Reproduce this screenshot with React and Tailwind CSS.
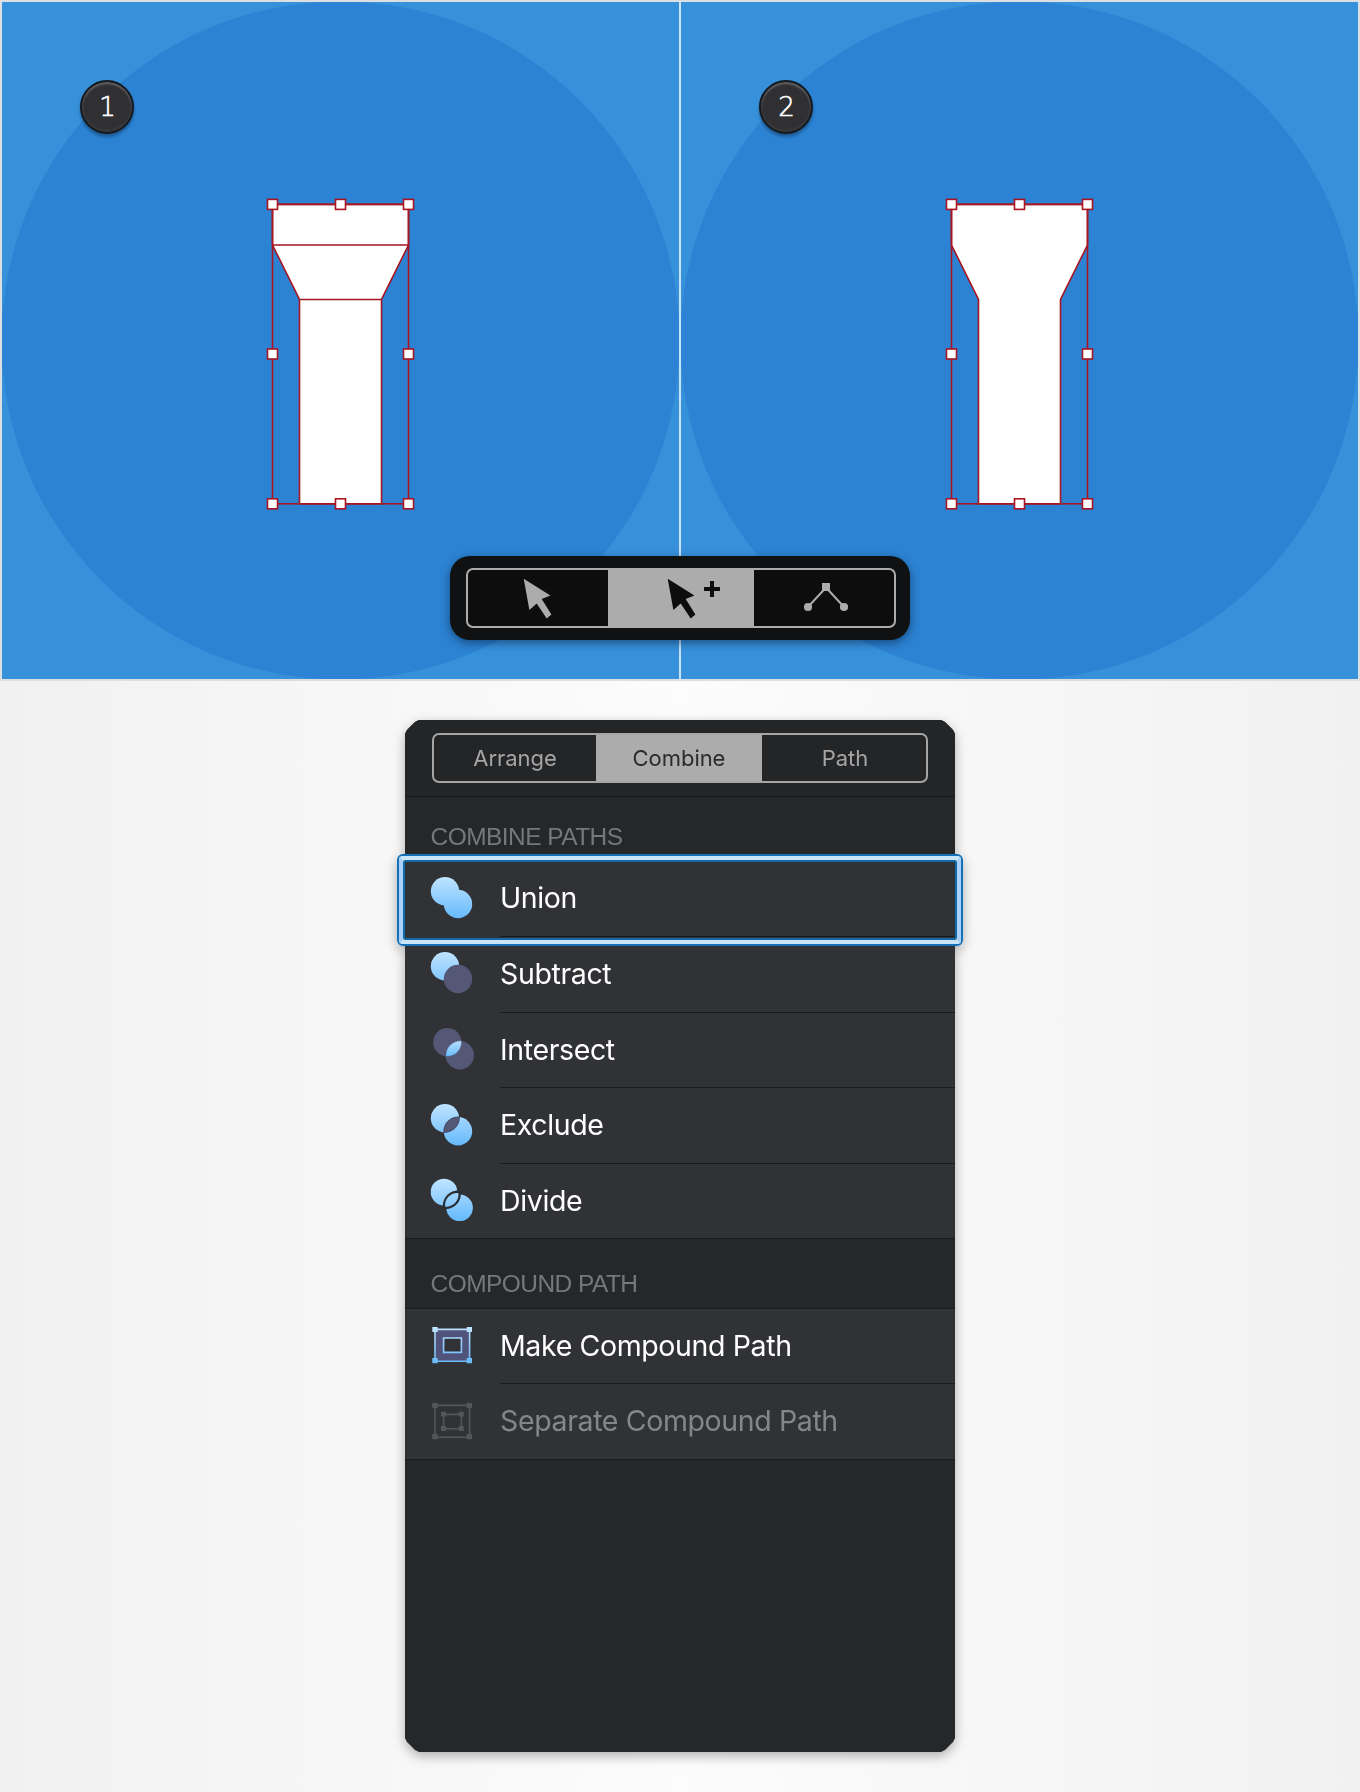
import React from "react";

const RED = "#a81420";

function Handles() {
  const points = [
    [272.5, 204.4], [340.5, 204.4], [408.5, 204.4],
    [272.5, 354], [408.5, 354],
    [272.5, 503.8], [340.5, 503.8], [408.5, 503.8],
  ];
  return points.map(([x, y]) => (
    <rect key={`${x}-${y}`} x={x - 5} y={y - 5} width="10" height="10" fill="#fff" stroke={RED} strokeWidth="1.6" />
  ));
}

function Flashlight({ merged }) {
  return (
    <svg className="block h-full w-full" viewBox="2 2 677 677" preserveAspectRatio="none">
      <circle cx="340.5" cy="340.5" r="339" fill="#2c83d3" />
      <path d="M272.5 204.4H408.5V245L381.5 299.5V503.8H299.5V299.5L272.5 245Z" fill="#fff" stroke={RED} strokeWidth="1.6" />
      {!merged && <path d="M272.5 245H408.5M299.5 299.5H381.5" stroke={RED} strokeWidth="1.6" />}
      <rect x="272.5" y="204.4" width="136" height="299.4" fill="none" stroke={RED} strokeWidth="1.6" />
      <Handles />
    </svg>
  );
}

function Canvas({ number, merged }) {
  return (
    <div className="relative h-[677px] flex-1 overflow-hidden bg-[#3791da]">
      <Flashlight merged={merged} />
      <div className="absolute left-[78px] top-[78px] flex h-[54px] w-[54px] items-center justify-center rounded-full border-2 border-[#151a20] bg-[#303033] pl-px font-['DejaVu_Sans',sans-serif] text-[26px] font-extralight leading-none text-white shadow-[0_3px_3px_rgba(10,30,60,0.4),inset_0_2px_2px_rgba(255,255,255,0.25),inset_0_-2px_3px_rgba(255,255,255,0.06)] [-webkit-text-stroke:0.6px_white]">
        {number}
      </div>
    </div>
  );
}

const ARROW = "M0 0L26.7 16.7L18 20.3L27.7 35.7L23 39.7L13 24.7L5.7 31.3Z";

function Toolbar() {
  return (
    <div className="absolute left-[450px] top-[556px] h-[84px] w-[460px] rounded-[20px] bg-[#101112] px-4 py-3 shadow-[0_3px_10px_rgba(0,20,50,0.5)]">
      <div className="flex h-[60px] w-[430px] overflow-hidden rounded-[7px] border-2 border-[#acacac] bg-[#0d0d0e]">
        <div className="h-full w-[140px]">
          <svg className="block" width="140" height="56">
            <path transform="translate(55.7 8.7)" d={ARROW} fill="#acacac" />
          </svg>
        </div>
        <div className="h-full w-[146px] bg-[#acacac]">
          <svg className="block" width="146" height="56">
            <path transform="translate(59.7 8.7)" d={ARROW} fill="#0d0d0e" />
            <path d="M96 19H112M104 11V27" stroke="#0d0d0e" strokeWidth="4" />
          </svg>
        </div>
        <div className="h-full flex-1">
          <svg className="block" width="140" height="56">
            <path d="M54 37L72 17.5L90 37" fill="none" stroke="#acacac" strokeWidth="2" />
            <path d="M68 13H76V21H68Z" fill="#acacac" />
            <circle cx="54" cy="37" r="4.1" fill="#acacac" />
            <circle cx="90" cy="37" r="4.1" fill="#acacac" />
          </svg>
        </div>
      </div>
    </div>
  );
}

function Tabs() {
  return (
    <div className="flex h-[77px] border-b border-[#191a1c] bg-[#242527] px-[27px] pt-[13px]">
      <div className="flex h-[50px] w-[496px] overflow-hidden rounded-[7px] border-2 border-[#a5a5a6] text-[22px] leading-[46px] tracking-[-0.05px]">
        <div className="w-[162px] text-center text-[#a5a5a6]">Arrange</div>
        <div className="w-[166px] bg-[#acacac] text-center text-[#2a2b2e]">Combine</div>
        <div className="flex-1 pl-[2px] text-center text-[#a5a5a6]">Path</div>
      </div>
    </div>
  );
}

function Gradient({ id, y1, y2 }) {
  return (
    <linearGradient id={id} gradientUnits="userSpaceOnUse" x1="0" x2="0" y1={y1} y2={y2}>
      <stop offset="0" stopColor="#bfe4ff" />
      <stop offset="1" stopColor="#67bafd" />
    </linearGradient>
  );
}

const MUTED = "#555777";
const LENS = "M28.9 14.9A14.2 14.2 0 0 1 13.9 28.6A14.2 14.2 0 0 1 28.9 14.9Z";

function BooleanIcon({ kind }) {
  const fill = `url(#g-${kind})`;
  return (
    <svg className="block" width="44" height="44" viewBox="-0.3 0 44 44">
      <defs>
        <Gradient id={`g-${kind}`} y1={kind === "intersect" ? 12 : 1} y2={kind === "intersect" ? 30 : 42} />
      </defs>
      {kind === "union" && (
        <>
          <circle cx="14.7" cy="15.2" r="14.2" fill={fill} />
          <circle cx="27.7" cy="28" r="14.2" fill={fill} />
        </>
      )}
      {kind === "subtract" && (
        <>
          <circle cx="14.7" cy="15.2" r="14.2" fill={fill} />
          <circle cx="27.7" cy="28" r="14.2" fill={MUTED} />
        </>
      )}
      {kind === "intersect" && (
        <g transform="translate(2.3 0)">
          <circle cx="14.7" cy="15.2" r="14.2" fill={MUTED} />
          <circle cx="27.2" cy="28.2" r="14.2" fill={MUTED} />
          <path d="M28.9 13.9C29.6 22.8 22.5 29.9 13.2 29.4C12.8 20.5 20 13.3 28.9 13.9Z" fill={fill} stroke="#424766" strokeWidth="0.4" />
        </g>
      )}
      {kind === "exclude" && (
        <>
          <circle cx="14.7" cy="15.2" r="14.2" fill={fill} />
          <circle cx="27.7" cy="28.2" r="14.2" fill={fill} />
          <path d="M29 14C29.6 22.5 22.5 29.6 13.5 29.4C13 20.5 20 13.4 29 14Z" fill={MUTED} stroke="#35405c" strokeWidth="0.8" />
        </>
      )}
      {kind === "divide" && (
        <>
          <circle cx="13.7" cy="14" r="13.3" fill={fill} />
          <circle cx="29.3" cy="29.8" r="13.3" fill={fill} />
          <path d="M30.2 12.6C32.4 23.5 23.8 32.3 12.8 31C10.9 20 19.3 11.2 30.2 12.6Z" fill="#292e36" />
          <path d="M28.1 15C29 22.5 23 29.2 14.8 28.7C14 21 20 14.5 28.1 15Z" fill={fill} />
        </>
      )}
    </svg>
  );
}

function CompoundIcon({ kind }) {
  const separate = kind === "separate";
  const color = separate ? "#55565a" : "url(#g-make)";
  return (
    <svg className="block" width="44" height="44" viewBox="0 0 44 44">
      <defs>
        <Gradient id="g-make" y1="4" y2="40" />
      </defs>
      <path fillRule="evenodd" d="M5 6.4H39.3V38.4H5ZM13.3 15.2V29.5H31.3V15.2Z" fill={separate ? "none" : "#50537a"} />
      <path
        d={separate ? "M5 6.4H39.6V38.3H5ZM13.6 15.4V29.8H31.4V15.4Z" : "M5 6.4H39.6V38.3H5ZM13.6 15V29.4H31.4V15Z"}
        fill="none"
        stroke={color}
        strokeWidth="1.6"
      />
      <path d="M2.3 4H7.7V9H2.3ZM36.7 4H42V9H36.7ZM2.3 35H7.7V40.3H2.3ZM36.7 35H42V40.3H36.7Z" fill={color} />
      {separate && (
        <path d="M11 12.7H16V17.5H11ZM28.8 12.7H33.8V17.5H28.8ZM11 27H16V32H11ZM28.8 27H33.8V32H28.8Z" fill={color} />
      )}
    </svg>
  );
}

function Row({ icon, label, last, muted, height, leading }) {
  return (
    <div className={`flex bg-[#313235] ${height} ${last ? "border-b border-[#1b1c1e]" : ""}`}>
      <div className="w-[95px] pl-[25px] pt-[14.5px]">{icon}</div>
      <div
        className={`flex-1 text-[28.5px] tracking-[-0.37px] ${leading} ${last ? "" : "border-b border-[#1b1c1f]"} ${muted ? "text-[#858689]" : "text-white"}`}
      >
        {label}
      </div>
    </div>
  );
}

function SectionTitle({ children, className }) {
  return (
    <div className={`border-b border-[#1b1c1e] pl-[25.5px] font-['Liberation_Sans',Arial,sans-serif] text-[24.5px] leading-[36px] tracking-[-0.55px] text-[#76777a] ${className}`}>
      {children}
    </div>
  );
}

const BOOLEANS = [
  ["union", "Union"],
  ["subtract", "Subtract"],
  ["intersect", "Intersect"],
  ["exclude", "Exclude"],
  ["divide", "Divide"],
];

function CombinePanel() {
  return (
    <div className="relative h-[1032px] w-[550px] drop-shadow-[0_4px_6px_rgba(0,0,0,0.3)]">
      <div className="h-full bg-[#262729] [clip-path:polygon(0_14px,2px_10px,10px_2px,14px_0,536px_0,540px_2px,548px_10px,550px_14px,550px_1018px,548px_1022px,540px_1030px,536px_1032px,14px_1032px,10px_1030px,2px_1022px,0_1018px)]">
        <Tabs />
        <SectionTitle className="h-[64.4px] pt-[22px]">COMBINE PATHS</SectionTitle>
        {BOOLEANS.map(([kind, label], i) => (
          <Row key={kind} height="h-[75.6px]" leading="leading-[74.6px]" icon={<BooleanIcon kind={kind} />} label={label} last={i === BOOLEANS.length - 1} />
        ))}
        <SectionTitle className="h-[69.6px] pt-[26.6px]">COMPOUND PATH</SectionTitle>
        <Row height="h-[75.4px]" leading="leading-[74px]" icon={<CompoundIcon kind="make" />} label="Make Compound Path" />
        <Row height="h-[75.4px]" leading="leading-[74px]" icon={<CompoundIcon kind="separate" />} label="Separate Compound Path" muted last />
      </div>
      <div className="absolute -left-2 top-[134px] h-[92px] w-[566px] rounded-[6px] border-2 border-[#1570b8]">
        <div className="h-full rounded-[4px] border-4 border-[#a9d1fa] border-y-[#c9e5fc]">
          <div className="h-full rounded-[3px] border-2 border-[#1568aa]" />
        </div>
      </div>
    </div>
  );
}

export default function App() {
  return (
    <div className="h-[1792px] w-[1360px] overflow-hidden bg-[linear-gradient(90deg,#f1f1f1_0%,#fcfcfc_50%,#f1f1f1_100%)] font-['Inter',sans-serif]">
      <div className="relative flex h-[681px] gap-[2px] border-2 border-[#dcdfe2] bg-[#c9e3f6]">
        <Canvas number="1" />
        <Canvas number="2" merged />
      </div>
      <div className="relative -top-[681px] h-0">
        <Toolbar />
      </div>
      <div className="flex justify-center pt-[39px]">
        <CombinePanel />
      </div>
    </div>
  );
}
